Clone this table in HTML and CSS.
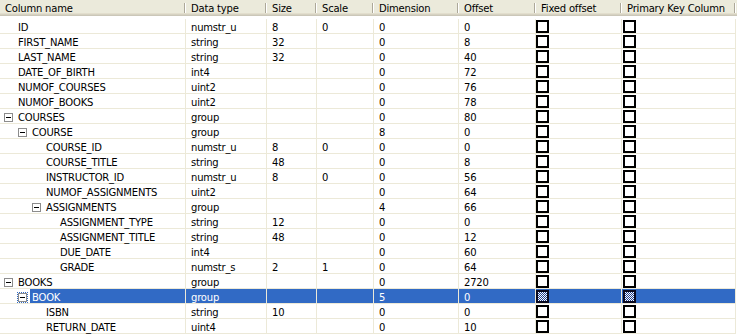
FILE: index.html
```html
<!DOCTYPE html>
<html>
<head>
<meta charset="utf-8">
<link rel="stylesheet" href="styles.css">
</head>
<body>
<div class="view">
  <div class="hdr">
    <div class="h">Column name</div>
    <div class="h">Data type</div>
    <div class="h">Size</div>
    <div class="h">Scale</div>
    <div class="h">Dimension</div>
    <div class="h">Offset</div>
    <div class="h">Fixed offset</div>
    <div class="h">Primary Key Column</div>
  </div>
  <div class="body">
    <div class="row"><div class="c name l0"><span class="sp"></span><span class="t">ID</span></div><div class="c">numstr_u</div><div class="c">8</div><div class="c">0</div><div class="c">0</div><div class="c">0</div><div class="c k1"><span class="cb"></span></div><div class="c k2"><span class="cb"></span></div></div>
    <div class="row"><div class="c name l0"><span class="sp"></span><span class="t">FIRST_NAME</span></div><div class="c">string</div><div class="c">32</div><div class="c"></div><div class="c">0</div><div class="c">8</div><div class="c k1"><span class="cb"></span></div><div class="c k2"><span class="cb"></span></div></div>
    <div class="row"><div class="c name l0"><span class="sp"></span><span class="t">LAST_NAME</span></div><div class="c">string</div><div class="c">32</div><div class="c"></div><div class="c">0</div><div class="c">40</div><div class="c k1"><span class="cb"></span></div><div class="c k2"><span class="cb"></span></div></div>
    <div class="row"><div class="c name l0"><span class="sp"></span><span class="t">DATE_OF_BIRTH</span></div><div class="c">int4</div><div class="c"></div><div class="c"></div><div class="c">0</div><div class="c">72</div><div class="c k1"><span class="cb"></span></div><div class="c k2"><span class="cb"></span></div></div>
    <div class="row"><div class="c name l0"><span class="sp"></span><span class="t">NUMOF_COURSES</span></div><div class="c">uint2</div><div class="c"></div><div class="c"></div><div class="c">0</div><div class="c">76</div><div class="c k1"><span class="cb"></span></div><div class="c k2"><span class="cb"></span></div></div>
    <div class="row"><div class="c name l0"><span class="sp"></span><span class="t">NUMOF_BOOKS</span></div><div class="c">uint2</div><div class="c"></div><div class="c"></div><div class="c">0</div><div class="c">78</div><div class="c k1"><span class="cb"></span></div><div class="c k2"><span class="cb"></span></div></div>
    <div class="row"><div class="c name l0"><span class="exp"></span><span class="t">COURSES</span></div><div class="c">group</div><div class="c"></div><div class="c"></div><div class="c">0</div><div class="c">80</div><div class="c k1"><span class="cb"></span></div><div class="c k2"><span class="cb"></span></div></div>
    <div class="row"><div class="c name l1"><span class="exp"></span><span class="t">COURSE</span></div><div class="c">group</div><div class="c"></div><div class="c"></div><div class="c">8</div><div class="c">0</div><div class="c k1"><span class="cb"></span></div><div class="c k2"><span class="cb"></span></div></div>
    <div class="row"><div class="c name l2"><span class="sp"></span><span class="t">COURSE_ID</span></div><div class="c">numstr_u</div><div class="c">8</div><div class="c">0</div><div class="c">0</div><div class="c">0</div><div class="c k1"><span class="cb"></span></div><div class="c k2"><span class="cb"></span></div></div>
    <div class="row"><div class="c name l2"><span class="sp"></span><span class="t">COURSE_TITLE</span></div><div class="c">string</div><div class="c">48</div><div class="c"></div><div class="c">0</div><div class="c">8</div><div class="c k1"><span class="cb"></span></div><div class="c k2"><span class="cb"></span></div></div>
    <div class="row"><div class="c name l2"><span class="sp"></span><span class="t">INSTRUCTOR_ID</span></div><div class="c">numstr_u</div><div class="c">8</div><div class="c">0</div><div class="c">0</div><div class="c">56</div><div class="c k1"><span class="cb"></span></div><div class="c k2"><span class="cb"></span></div></div>
    <div class="row"><div class="c name l2"><span class="sp"></span><span class="t">NUMOF_ASSIGNMENTS</span></div><div class="c">uint2</div><div class="c"></div><div class="c"></div><div class="c">0</div><div class="c">64</div><div class="c k1"><span class="cb"></span></div><div class="c k2"><span class="cb"></span></div></div>
    <div class="row"><div class="c name l2"><span class="exp"></span><span class="t">ASSIGNMENTS</span></div><div class="c">group</div><div class="c"></div><div class="c"></div><div class="c">4</div><div class="c">66</div><div class="c k1"><span class="cb"></span></div><div class="c k2"><span class="cb"></span></div></div>
    <div class="row"><div class="c name l3"><span class="sp"></span><span class="t">ASSIGNMENT_TYPE</span></div><div class="c">string</div><div class="c">12</div><div class="c"></div><div class="c">0</div><div class="c">0</div><div class="c k1"><span class="cb"></span></div><div class="c k2"><span class="cb"></span></div></div>
    <div class="row"><div class="c name l3"><span class="sp"></span><span class="t">ASSIGNMENT_TITLE</span></div><div class="c">string</div><div class="c">48</div><div class="c"></div><div class="c">0</div><div class="c">12</div><div class="c k1"><span class="cb"></span></div><div class="c k2"><span class="cb"></span></div></div>
    <div class="row"><div class="c name l3"><span class="sp"></span><span class="t">DUE_DATE</span></div><div class="c">int4</div><div class="c"></div><div class="c"></div><div class="c">0</div><div class="c">60</div><div class="c k1"><span class="cb"></span></div><div class="c k2"><span class="cb"></span></div></div>
    <div class="row"><div class="c name l3"><span class="sp"></span><span class="t">GRADE</span></div><div class="c">numstr_s</div><div class="c">2</div><div class="c">1</div><div class="c">0</div><div class="c">64</div><div class="c k1"><span class="cb"></span></div><div class="c k2"><span class="cb"></span></div></div>
    <div class="row"><div class="c name l0"><span class="exp"></span><span class="t">BOOKS</span></div><div class="c">group</div><div class="c"></div><div class="c"></div><div class="c">0</div><div class="c">2720</div><div class="c k1"><span class="cb"></span></div><div class="c k2"><span class="cb"></span></div></div>
    <div class="row sel"><div class="c name l1"><span class="exp focus"></span><span class="t">BOOK</span></div><div class="c">group</div><div class="c"></div><div class="c"></div><div class="c">5</div><div class="c">0</div><div class="c k1"><span class="cb"></span></div><div class="c k2"><span class="cb"></span></div></div>
    <div class="row"><div class="c name l2"><span class="sp"></span><span class="t">ISBN</span></div><div class="c">string</div><div class="c">10</div><div class="c"></div><div class="c">0</div><div class="c">0</div><div class="c k1"><span class="cb"></span></div><div class="c k2"><span class="cb"></span></div></div>
    <div class="row"><div class="c name l2"><span class="sp"></span><span class="t">RETURN_DATE</span></div><div class="c">uint4</div><div class="c"></div><div class="c"></div><div class="c">0</div><div class="c">10</div><div class="c k1"><span class="cb"></span></div><div class="c k2"><span class="cb"></span></div></div>
  </div>
</div>
</body>
</html>
```
FILE: styles.css
```css
* { box-sizing: border-box; }
html, body {
  margin: 0;
  padding: 0;
  background: #fff;
}
body {
  font-family: "DejaVu Sans", "Liberation Sans", sans-serif;
  font-size: 10px;
  letter-spacing: -0.2px;
  color: #000;
  width: 737px;
  height: 336px;
  overflow: hidden;
}
.hdr {
  display: grid;
  grid-template-columns: 186px 81px 50px 57px 85px 77px 86px 114px;
  height: 16px;
  background: linear-gradient(to bottom, #ebeadb 0 13px, #e2decd 13px 14px, #d6d2c2 14px 15px, #cbc7b8 15px 16px);
}
.h {
  padding-left: 5px;
  height: 16px;
  line-height: 18px;
  white-space: nowrap;
  background:
    linear-gradient(#aca899, #aca899) right 1px top 3px / 1px 10px no-repeat,
    linear-gradient(#fff, #fff) right 0 top 3px / 1px 10px no-repeat;
}
.body {
  padding-top: 3px;
}
.row {
  display: grid;
  grid-template-columns: 186px 81px 50px 57px 85px 77px 86px 114px;
  height: 15px;
}
.c {
  height: 15px;
  border-right: 1px solid #ece9d8;
  border-bottom: 1px solid #ece9d8;
  padding-left: 5px;
  line-height: 18px;
  white-space: nowrap;
}
.name {
  display: flex;
  align-items: flex-start;
  padding-left: 4px;
}
.l1 { padding-left: 18px; }
.l2 { padding-left: 32px; }
.l3 { padding-left: 46px; }
.sp {
  flex: 0 0 14px;
}
.exp {
  flex: 0 0 9px;
  width: 9px;
  height: 9px;
  margin-top: 4px;
  margin-right: 5px;
  border: 1px solid #8c8c8c;
  background: #fff linear-gradient(#000, #000) center / 5px 1px no-repeat;
}
.t {
  line-height: 18px;
  height: 14px;
}
.k1 { padding-left: 0; }
.k2 { padding-left: 1px; }
.cb {
  display: block;
  width: 13px;
  height: 13px;
  margin-top: 1px;
  border: 2px solid #000;
  background: #fff;
}
.sel .c {
  background: #316ac5;
  color: #fff;
}
.sel .c.name {
  background: #fff;
}
.sel .exp {
  margin-right: 3px;
  outline: 1px dotted #316ac5;
  outline-offset: 0;
}
.sel .t {
  flex: 1;
  background: #316ac5;
  color: #fff;
  padding-left: 2px;
  overflow: hidden;
}
.sel .cb {
  border-color: #0a0a20;
  background: repeating-conic-gradient(#1f3f8f 0 25%, #ffffff 0 50%) 0 0 / 2px 2px;
}
```
